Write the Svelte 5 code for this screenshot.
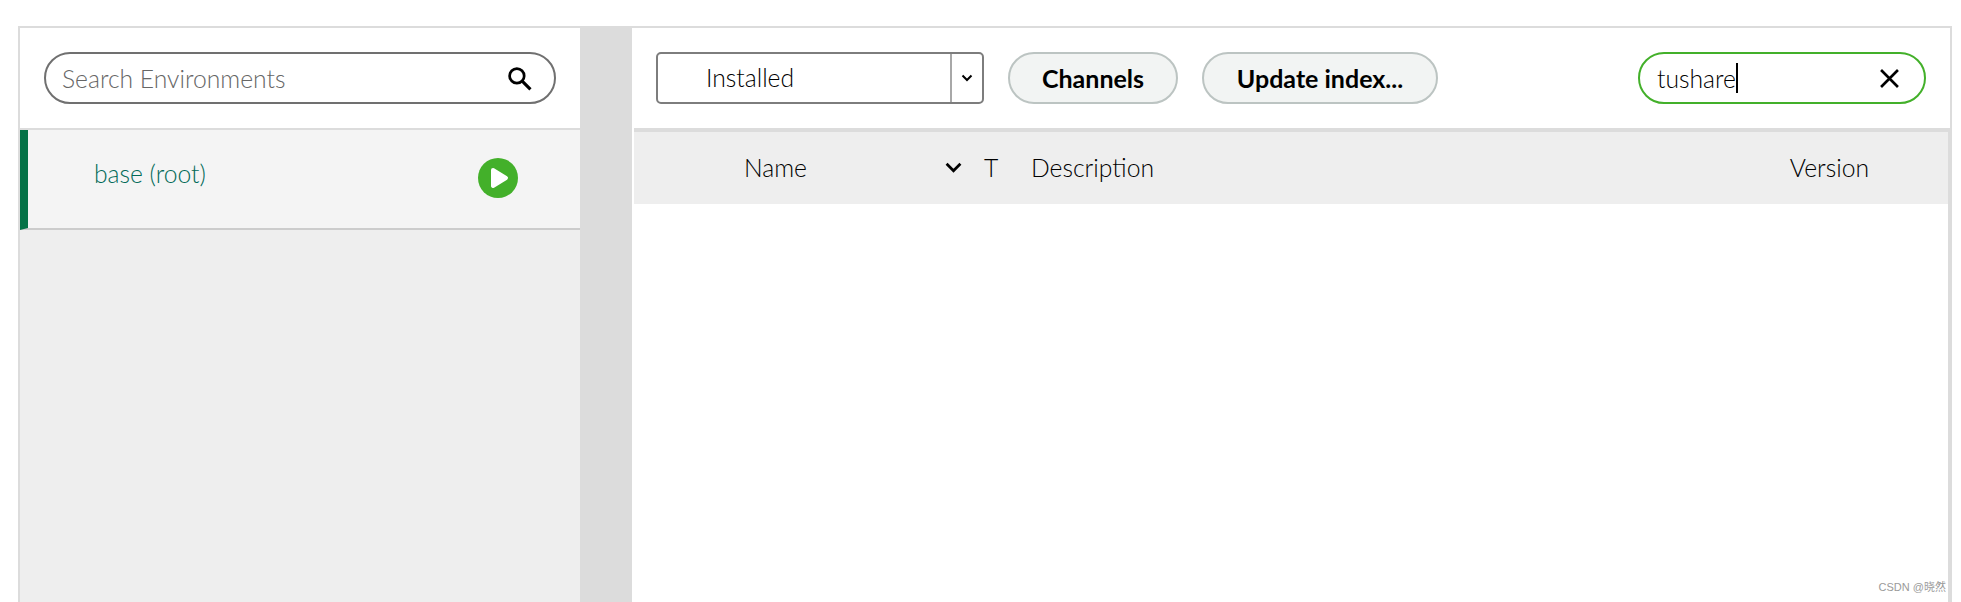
<script>
  let query = $state('tushare');
  let envSearch = $state('');
  const columns = ['Name', 'T', 'Description', 'Version'];
</script>

<div class="page">
  <div class="frame">
    <aside class="sidebar">
      <div class="sidebar__search">
        <label class="env-search">
          <input bind:value={envSearch} placeholder="Search Environments" aria-label="Search Environments" />
          <svg viewBox="0 0 24 24" width="25" height="25" aria-hidden="true">
            <circle cx="9.5" cy="9.5" r="7" fill="none" stroke="#000" stroke-width="2.6" />
            <path d="M14.6 14.6 L22.5 22.5" stroke="#000" stroke-width="3" fill="none" />
          </svg>
        </label>
      </div>
      <div class="env">
        <span class="env__name">base (root)</span>
        <svg class="env__play" viewBox="0 0 40 40" width="40" height="40" aria-hidden="true">
          <circle cx="20" cy="20" r="20" fill="#43b02a" />
          <path d="M15 12 L28 20 L15 28 Z" fill="#fff" stroke="#fff" stroke-width="4" stroke-linejoin="round" />
        </svg>
      </div>
    </aside>

    <div class="divider"></div>

    <main class="main">
      <div class="toolbar">
        <div class="select">
          <span class="select__value">Installed</span>
          <span class="select__arrow">
            <svg viewBox="0 0 12 8" width="12" height="8" aria-hidden="true">
              <path d="M1.5 1.5 L6 6 L10.5 1.5" fill="none" stroke="#000" stroke-width="2" />
            </svg>
          </span>
        </div>
        <button class="btn btn--channels">Channels</button>
        <button class="btn btn--update">Update index...</button>
        <div class="pkg-search">
          <span class="pkg-search__text">{query}</span><span class="pkg-search__caret"></span>
          <svg viewBox="0 0 18 18" width="19" height="19" aria-hidden="true">
            <path d="M1 1 L17 17 M17 1 L1 17" stroke="#000" stroke-width="2.5" fill="none" />
          </svg>
        </div>
      </div>

      <div class="table">
        <div class="table__head">
          <span class="col col--name">{columns[0]}</span>
          <svg class="col__sort" viewBox="0 0 16 10" width="17" height="11" aria-hidden="true">
            <path d="M1.5 1.5 L8 8 L14.5 1.5" fill="none" stroke="#000" stroke-width="2.6" />
          </svg>
          <span class="col col--type">{columns[1]}</span>
          <span class="col col--desc">{columns[2]}</span>
          <span class="col col--version">{columns[3]}</span>
        </div>
      </div>
    </main>
  </div>
  <span class="watermark">CSDN @晓然</span>
</div>

<style>
  :global(body) {
    margin: 0;
    background: #fff;
  }

  .page {
    position: relative;
    height: 602px;
    padding: 26px 9px 0 18px;
    box-sizing: border-box;
    overflow: hidden;
    font-family: "Lato", "Noto Sans", sans-serif;
    font-weight: 300;
    font-size: 24.7px;
    color: #000;
  }

  .frame {
    display: grid;
    grid-template-columns: 560px 52px 1fr;
    height: 100%;
    border: 2px solid #dcdcdc;
    border-bottom: 0;
    box-sizing: border-box;
  }

  .sidebar {
    display: flex;
    flex-direction: column;
    background: #eeeeee;
  }

  .sidebar__search {
    height: 76px;
    padding: 24px 24px 0 24px;
    background: #fff;
    border-bottom: 2px solid #dcdcdc;
  }

  .env-search {
    display: flex;
    align-items: center;
    height: 52px;
    width: 512px;
    padding: 0 22px 0 16px;
    box-sizing: border-box;
    border: 2px solid #707070;
    border-radius: 26px;
  }

  .env-search input {
    flex: 1;
    min-width: 0;
    border: 0;
    outline: 0;
    padding: 0;
    background: none;
    font: inherit;
  }

  .env-search input::placeholder {
    color: #666;
    opacity: 1;
  }

  .env {
    display: flex;
    align-items: center;
    justify-content: space-between;
    height: 98px;
    padding: 0 62px 0 66px;
    background: #f4f4f4;
    border-left: 8px solid #047246;
    border-bottom: 2px solid #cccccc;
  }

  .env__name {
    color: #026a58;
    margin-top: -12px;
  }

  .env__play {
    margin-top: -2px;
  }

  .divider {
    background: #dcdcdc;
  }

  .main {
    display: flex;
    flex-direction: column;
    min-width: 0;
  }

  .toolbar {
    display: flex;
    align-items: center;
    gap: 24px;
    height: 100px;
    padding: 0 24px;
    box-sizing: border-box;
    background: #fff;
  }

  .select {
    display: flex;
    width: 328px;
    height: 52px;
    box-sizing: border-box;
    border: 2px solid #7d7d7d;
    border-radius: 5px;
  }

  .select__value {
    flex: 1;
    padding-left: 48px;
    line-height: 48px;
  }

  .select__arrow {
    display: flex;
    align-items: center;
    justify-content: center;
    width: 30px;
    border-left: 2px solid #a8a8a8;
  }

  .btn {
    height: 52px;
    padding: 0;
    border: 2px solid #bcc4c2;
    border-radius: 26px;
    background: #f2f4f3;
    font: inherit;
    font-size: 25px;
    font-weight: 700;
    color: #000;
  }

  .btn--channels {
    width: 170px;
  }

  .btn--update {
    width: 236px;
  }

  .pkg-search {
    display: flex;
    align-items: center;
    width: 288px;
    height: 52px;
    margin-left: auto;
    padding: 0 25px 0 17px;
    box-sizing: border-box;
    border: 2px solid #43b02a;
    border-radius: 26px;
  }

  .pkg-search__caret {
    width: 2px;
    height: 30px;
    background: #000;
  }

  .pkg-search svg {
    margin-left: auto;
  }

  .table {
    flex: 1;
    margin-left: 2px;
    border-top: 4px solid #dcdcdc;
    border-right: 2px solid #dcdcdc;
    background: #fff;
  }

  .table__head {
    display: flex;
    align-items: center;
    height: 72px;
    padding: 0 0 2px 110px;
    box-sizing: border-box;
    background: #eeeeee;
  }

  .col--name {
    width: 201px;
  }

  .col__sort {
    flex: none;
  }

  .col--type {
    margin-left: 22px;
    width: 47px;
  }

  .col--version {
    margin-left: auto;
    margin-right: 79px;
  }

  .watermark {
    position: absolute;
    right: 15px;
    bottom: 8px;
    font-family: "Liberation Sans", "Noto Sans CJK SC", sans-serif;
    font-size: 11px;
    font-weight: 400;
    color: #9a9a9a;
  }
</style>
